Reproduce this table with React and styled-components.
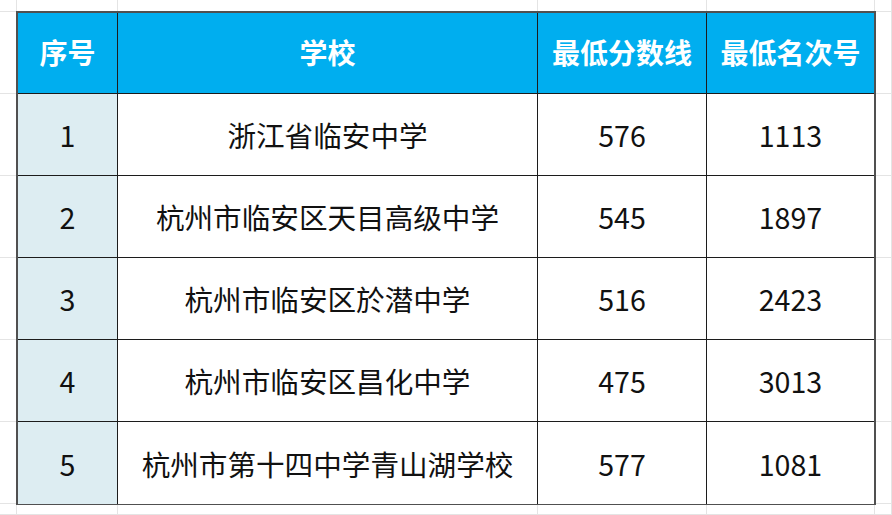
import styled, { createGlobalStyle } from 'styled-components';

const GlobalStyle = createGlobalStyle`
  html, body {
    margin: 0;
    padding: 0;
    background: #ffffff;
  }
  body {
    font-family: "Noto Sans CJK SC", "Noto Sans", sans-serif;
  }
`;

const COLUMNS = ['序号', '学校', '最低分数线', '最低名次号'];

const ROWS = [
  { id: 1, school: '浙江省临安中学', score: 576, rank: 1113 },
  { id: 2, school: '杭州市临安区天目高级中学', score: 545, rank: 1897 },
  { id: 3, school: '杭州市临安区於潜中学', score: 516, rank: 2423 },
  { id: 4, school: '杭州市临安区昌化中学', score: 475, rank: 3013 },
  { id: 5, school: '杭州市第十四中学青山湖学校', score: 577, rank: 1081 },
];

// spreadsheet grid around the table
const Sheet = styled.div`
  display: grid;
  grid-template-columns: 17px 101px 420px 169px 168px 1fr;
  grid-template-rows: 12px repeat(6, 82px) 1fr;
  width: 892px;
  height: 515px;
  overflow: hidden;
`;

const GridCell = styled.div`
  box-sizing: border-box;
  border-right: 1px solid #e4e4e4;
  border-bottom: 1px solid #e4e4e4;
  grid-column: ${(p) => p.$col};
  grid-row: ${(p) => p.$row};
`;

const Table = styled.div`
  grid-column: 2 / 6;
  grid-row: 2 / 8;
  margin: -1px;
  display: grid;
  grid-template-columns: 100px 420px 169px 167px;
  grid-template-rows: 81px repeat(5, 82px);
  border: 2px solid #505050;
  background: #ffffff;
  position: relative;
  z-index: 1;
`;

const Cell = styled.div`
  box-sizing: border-box;
  display: flex;
  align-items: center;
  justify-content: center;
  border-right: ${(p) => (p.$lastCol ? 'none' : '1px solid #1c1c1c')};
  border-bottom: ${(p) => (p.$lastRow ? 'none' : '1px solid #1c1c1c')};
  font-size: 28.6px;
  color: #111111;
  white-space: nowrap;
  background: ${(p) => (p.$shaded ? '#ddedf2' : '#ffffff')};
`;

const HeadCell = styled(Cell)`
  background: #00aeef;
  color: #ffffff;
  font-weight: 700;
  font-size: 28px;
  padding-bottom: 2px;
`;

function buildMargins() {
  const cells = [];
  for (let col = 1; col <= 6; col += 1) {
    cells.push(<GridCell key={`t${col}`} $col={col} $row={1} />);
    cells.push(<GridCell key={`b${col}`} $col={col} $row={8} />);
  }
  for (let row = 2; row <= 7; row += 1) {
    cells.push(<GridCell key={`l${row}`} $col={1} $row={row} />);
    cells.push(<GridCell key={`r${row}`} $col={6} $row={row} />);
  }
  return cells;
}

export default function App() {
  return (
    <>
      <GlobalStyle />
      <Sheet>
        {buildMargins()}
        <Table>
          {COLUMNS.map((name, i) => {
            return (
              <HeadCell key={name} $lastCol={i === COLUMNS.length - 1}>
                {name}
              </HeadCell>
            );
          })}
          {ROWS.map((row, r) => {
            const lastRow = r === ROWS.length - 1;
            return [
              <Cell key={`${row.id}-n`} $shaded $lastRow={lastRow}>
                {row.id}
              </Cell>,
              <Cell key={`${row.id}-s`} $lastRow={lastRow}>
                {row.school}
              </Cell>,
              <Cell key={`${row.id}-c`} $lastRow={lastRow}>
                {row.score}
              </Cell>,
              <Cell key={`${row.id}-k`} $lastRow={lastRow} $lastCol>
                {row.rank}
              </Cell>,
            ];
          })}
        </Table>
      </Sheet>
    </>
  );
}
